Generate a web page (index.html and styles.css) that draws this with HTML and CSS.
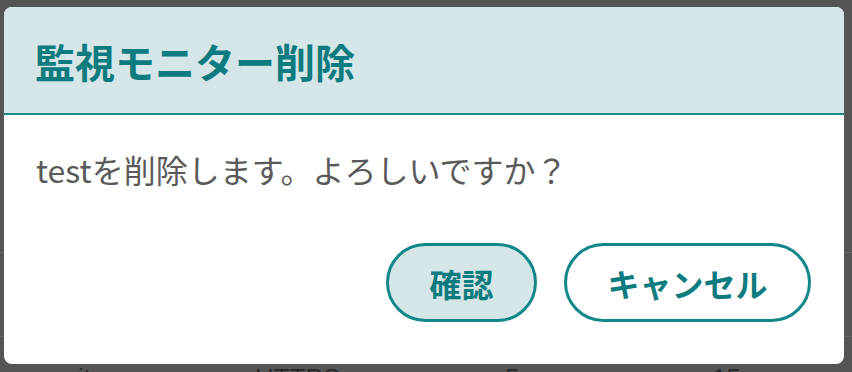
FILE: index.html
```html
<!DOCTYPE html>
<html lang="ja">
<head>
<meta charset="utf-8">
<link rel="stylesheet" href="styles.css">
</head>
<body>
<div class="page">
  <div class="bg-lines">
    <div class="bg-line l1"></div>
    <div class="bg-line l2"></div>
  </div>
  <div class="dialog">
    <div class="dialog-header">
      <h1 class="dialog-title">監視モニター削除</h1>
    </div>
    <div class="dialog-body">
      <p class="dialog-message">testを削除します。よろしいですか？</p>
    </div>
    <div class="dialog-actions">
      <button class="btn btn-primary">確認</button>
      <button class="btn btn-secondary">キャンセル</button>
    </div>
  </div>
  <div class="bg-row">
    <span class="bg-cell c1">it</span>
    <span class="bg-cell c2">HTTPS</span>
    <span class="bg-cell c3">5</span>
    <span class="bg-cell c4">15</span>
  </div>
</div>
</body>
</html>
```
FILE: styles.css
```css
html, body {
  margin: 0;
  padding: 0;
  background: #555555;
  overflow: hidden;
}

.page {
  position: relative;
  width: 852px;
  height: 372px;
  padding-top: 7px;
  box-sizing: border-box;
  overflow: hidden;
  font-family: "Noto Sans CJK JP", "Noto Sans", sans-serif;
}

.bg-lines {
  position: absolute;
  inset: 0;
}

.bg-line {
  position: absolute;
  left: 0;
  right: 0;
  height: 1px;
  background: #666666;
}

.bg-line.l1 { top: 252px; }
.bg-line.l2 { top: 336px; }

.dialog {
  position: relative;
  margin-left: 4px;
  width: 840px;
  height: 357px;
  background: #ffffff;
  border-radius: 8px;
  overflow: hidden;
  display: flex;
  flex-direction: column;
}

.dialog-header {
  height: 108px;
  box-sizing: border-box;
  background: #d4e6e8;
  border-bottom: 2px solid #178b8e;
  display: flex;
  align-items: center;
  padding-left: 31px;
}

.dialog-title {
  margin: 0;
  font-size: 40px;
  font-weight: 700;
  color: #0e7b7f;
  line-height: 1;
  padding-top: 2px;
}

.dialog-body {
  padding: 30px 0 0 32px;
}

.dialog-message {
  margin: 0;
  font-size: 32px;
  line-height: 48px;
  color: #5a5a5a;
}

.dialog-actions {
  margin-top: 50px;
  display: flex;
  justify-content: flex-end;
  gap: 27px;
  padding-right: 33px;
}

.btn {
  height: 79px;
  box-sizing: border-box;
  border: 3px solid #12878a;
  border-radius: 40px;
  padding: 0 40px;
  font-family: "Noto Sans CJK JP", "Noto Sans", sans-serif;
  font-size: 32px;
  font-weight: 700;
  color: #0e7b7f;
  line-height: 1;
  display: flex;
  align-items: center;
  justify-content: center;
}

.btn-primary {
  background: #d4e6e8;
  width: 151px;
}

.btn-secondary {
  background: #ffffff;
  width: 247px;
}

.bg-row {
  position: relative;
  height: 8px;
  overflow: hidden;
  font-family: "Liberation Sans", sans-serif;
  font-size: 26px;
  color: #2a2a2a;
  line-height: 1;
}

.bg-cell {
  position: absolute;
  top: 1px;
}

.bg-cell.c1 { left: 78px; }
.bg-cell.c2 { left: 255px; }
.bg-cell.c3 { left: 505px; }
.bg-cell.c4 { left: 712px; }
```
